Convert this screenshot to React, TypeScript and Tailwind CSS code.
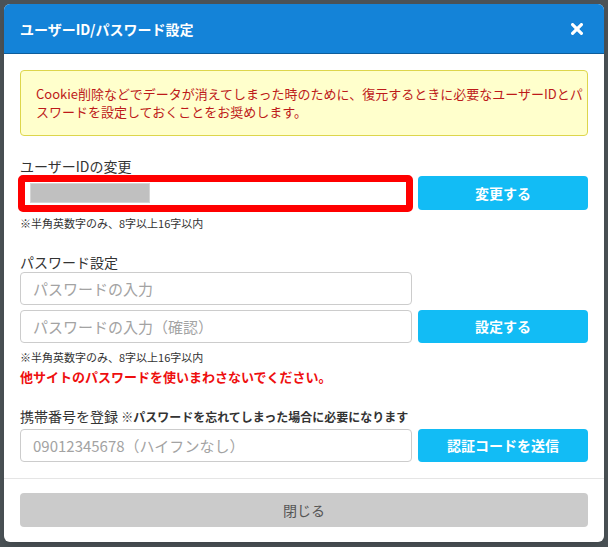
import React from 'react';

const inputCls =
  'h-[33px] w-[392px] rounded-[4px] border border-[#cccccc] bg-white px-3 text-[15px] text-[#333] placeholder:text-[#a3a3a3] outline-none';
const btnCls =
  'flex h-[33px] w-[170px] items-center justify-center rounded-[4px] bg-[#12bcf5] text-[14px] font-bold text-white';

const CloseIcon: React.FC = () => (
  <svg width="12" height="12" viewBox="0 0 12 12" aria-hidden="true">
    <path d="M1.6 1.6 L10.4 10.4 M10.4 1.6 L1.6 10.4" stroke="#fff" strokeWidth="3.2" strokeLinecap="round" />
  </svg>
);

const Hint: React.FC = () => (
  <p className="text-[11px] leading-[16px] text-[#333]">※半角英数字のみ、8字以上16字以内</p>
);

export default function App() {
  return (
    <div className="min-h-[547px] bg-[#4b5256] p-[4px] font-['Noto_Sans_CJK_JP',sans-serif]">
      <div className="h-[538px] w-[600px] overflow-hidden rounded-[6px] bg-white shadow-lg">
        {/* header */}
        <div className="flex h-[50px] items-center justify-between border-b border-[#0e5d9b] bg-[#1483d8] pl-4 pr-[17px]">
          <h2 className="text-[14px] font-bold leading-[20px] text-white">ユーザーID/パスワード設定</h2>
          <button type="button" className="flex h-5 w-5 items-center justify-center">
            <CloseIcon />
          </button>
        </div>

        {/* body */}
        <div className="px-4 pt-4 pb-4">
          <div className="rounded-[4px] border border-[#ddd64c] bg-[#ffffcc] px-[15px] py-[14px] text-[13px] leading-[18px] text-[#bd1a1a]">
            <span className="whitespace-nowrap">Cookie削除などでデータが消えてしまった時のために、復元するときに必要なユーザーIDとパ</span>
            <br />
            スワードを設定しておくことをお奨めします。
          </div>

          <div className="mt-[20px]">
            <p className="text-[14px] leading-[20px] text-[#333]">ユーザーIDの変更</p>
            <div className="flex gap-[6px]">
              <div className="relative h-[34px] w-[392px] rounded-[4px] border border-[#cccccc] bg-white">
                <div className="absolute left-[9px] top-[6px] h-[20px] w-[120px] border border-[#d4d4d4] bg-[#c0c0c0]" />
                <div className="absolute -left-[3px] -top-[2px] -right-[2px] -bottom-[3px] rounded-[5px] border-[7px] border-[#ff0000]" />
              </div>
              <button type="button" className={btnCls + ' h-[34px]'}>
                変更する
              </button>
            </div>
            <div className="mt-[5px]">
              <Hint />
            </div>
          </div>

          <div className="mt-[21px]">
            <p className="text-[14px] leading-[20px] text-[#333]">パスワード設定</p>
            <input type="password" className={inputCls} placeholder="パスワードの入力" />
            <div className="mt-[5px] flex gap-[6px]">
              <input type="password" className={inputCls} placeholder="パスワードの入力（確認）" />
              <button type="button" className={btnCls}>
                設定する
              </button>
            </div>
            <div className="mt-[6px]">
              <Hint />
            </div>
            <p className="mt-[4px] text-[13px] font-bold leading-[16px] text-[#ee0f0f]">
              他サイトのパスワードを使いまわさないでください。
            </p>
          </div>

          <div className="mt-[21px]">
            <p className="text-[14px] leading-[20px] text-[#333]">
              携帯番号を登録 <span className="text-[12px] font-bold">※パスワードを忘れてしまった場合に必要になります</span>
            </p>
            <div className="mt-[2px] flex gap-[6px]">
              <input type="tel" className={inputCls} placeholder="09012345678（ハイフンなし）" />
              <button type="button" className={btnCls}>
                認証コードを送信
              </button>
            </div>
          </div>
        </div>

        {/* footer */}
        <div className="border-t border-[#e5e5e5] px-4 pt-[14px]">
          <button
            type="button"
            className="flex h-[34px] w-full items-center justify-center rounded-[4px] bg-[#cbcbcb] text-[14px] text-[#555]"
          >
            閉じる
          </button>
        </div>
      </div>
    </div>
  );
}
